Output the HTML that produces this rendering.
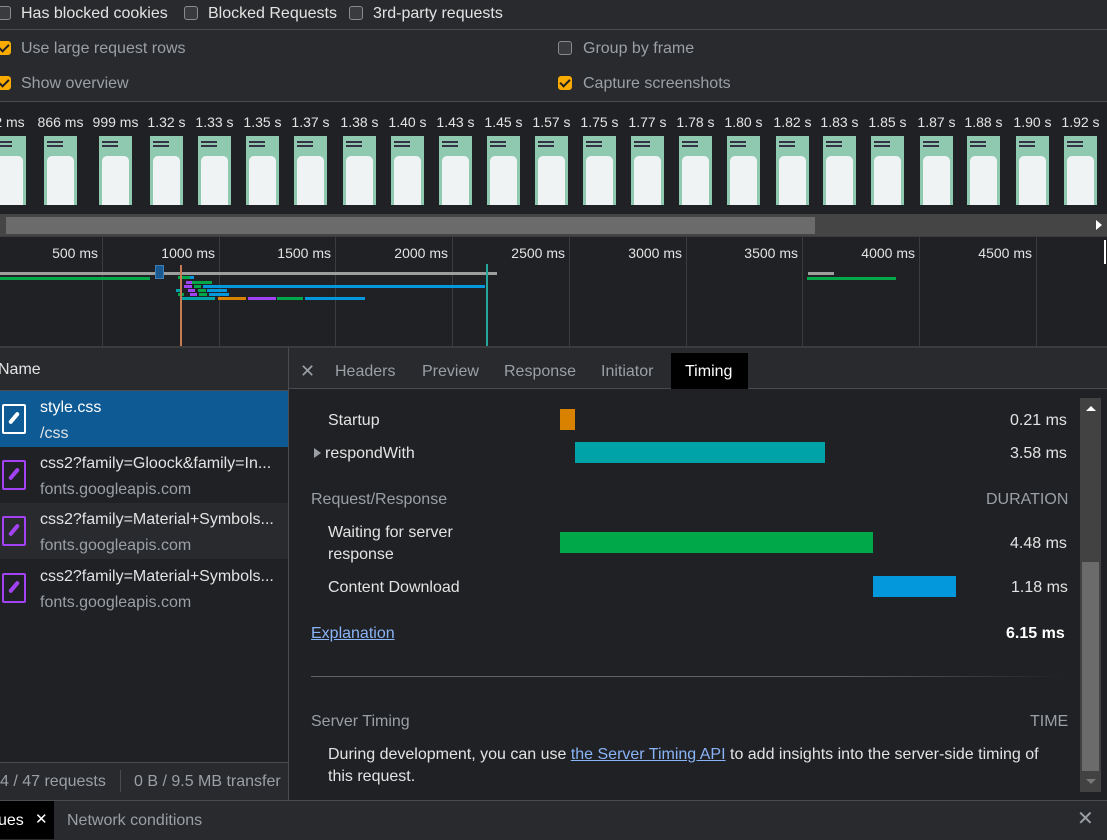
<!DOCTYPE html>
<html><head><meta charset="utf-8">
<style>
*{box-sizing:border-box;margin:0;padding:0}
body{width:1107px;height:840px;overflow:hidden;background:#202124;font-family:"Liberation Sans",sans-serif;font-size:16px;line-height:22px;color:#e3e3e3;position:relative}
.a{position:absolute;white-space:nowrap}
.cb{position:absolute;width:14px;height:14px;border:1.5px solid #8a8a8a;border-radius:3px;background:#3a3b3e}
.cb.on{background:#f9ab00;border-color:#f9ab00}
.cb.on:after{content:"";position:absolute;left:3px;top:0px;width:4px;height:8px;border:solid #202124;border-width:0 2px 2px 0;transform:rotate(45deg)}
.lbl{color:#9aa0a6}
.th{position:absolute;top:136px;width:33px;height:69px;background:#8fc9b0;overflow:hidden}
.th .c{position:absolute;left:3px;right:3px;top:20px;bottom:0;background:#eff3f3;border-radius:5px 5px 0 0}
.th .t{position:absolute;left:3px;top:5px;width:16px;height:2px;background:#334;box-shadow:0 4px 0 #334}
.tl{position:absolute;top:237px;width:1px;height:110px;background:#3c3c3f}
.tlab{position:absolute;top:242px;font-size:14px;color:#e3e3e3;text-align:right;width:90px}
.bar{position:absolute;height:3px}
.row{position:absolute;left:0;width:288px;height:56px}
.ic{position:absolute;left:2px;top:13px;width:24px;height:30px;border:2.5px solid #a142f4;border-radius:2px}
.ic:after{content:"";position:absolute;left:3px;top:10px;width:14px;height:4px;background:#a142f4;transform:rotate(-50deg);border-radius:2px}
.ic.w{border-color:#fff}.ic.w:after{background:#fff}
.n1{position:absolute;left:40px;top:6px;color:#e3e3e3}
.n2{position:absolute;left:40px;top:32px;color:#9aa0a6}
</style></head><body>
<div class="a" style="left:0;top:0;width:1107px;height:101px;background:#292a2d"></div>
<div class="a" style="left:0;top:29px;width:1107px;height:1px;background:#494c50"></div>
<div class="a" style="left:0;top:101px;width:1107px;height:1px;background:#494c50"></div>
<div class="cb" style="left:-3px;top:6px"></div><div class="a" style="left:21px;top:3px">Has blocked cookies</div>
<div class="cb" style="left:184px;top:6px"></div><div class="a" style="left:208px;top:3px">Blocked Requests</div>
<div class="cb" style="left:349px;top:6px"></div><div class="a" style="left:373px;top:3px">3rd-party requests</div>
<div class="cb on" style="left:-3px;top:41px"></div><div class="a lbl" style="left:21px;top:38px">Use large request rows</div>
<div class="cb on" style="left:-3px;top:76px"></div><div class="a lbl" style="left:21px;top:73px">Show overview</div>
<div class="cb" style="left:558px;top:41px"></div><div class="a lbl" style="left:583px;top:38px">Group by frame</div>
<div class="cb on" style="left:558px;top:76px"></div><div class="a lbl" style="left:583px;top:73px">Capture screenshots</div>
<div id="film"></div>
<div class="a" style="left:0;top:214px;width:1107px;height:22px;background:#454545"></div>
<div class="a" style="left:6px;top:217px;width:809px;height:17px;background:#6b6b6b"></div>
<div class="a" style="left:1096px;top:220px;width:0;height:0;border-left:6px solid #fff;border-top:5px solid transparent;border-bottom:5px solid transparent"></div>
<div class="a" style="left:0;top:236px;width:1107px;height:1px;background:#3c3c3f"></div>
<div id="tl"></div>
<div class="a" style="left:0;top:346px;width:1107px;height:2px;background:#3c3c3f"></div>
<div class="a" style="left:0;top:348px;width:288px;height:452px;background:#202124"></div>
<div class="a" style="left:0;top:348px;width:288px;height:43px;background:#292a2d;border-bottom:1px solid #494c50"></div>
<div class="a" style="left:-2px;top:359px">Name</div>
<div class="row" style="top:391px;background:#0e5a94"><div class="ic w"></div><div class="n1" style="color:#fff">style.css</div><div class="n2" style="color:#e3e3e3">/css</div></div>
<div class="row" style="top:447px;background:#202124"><div class="ic"></div><div class="n1">css2?family=Gloock&amp;family=In...</div><div class="n2">fonts.googleapis.com</div></div>
<div class="row" style="top:503px;background:#292a2d"><div class="ic"></div><div class="n1">css2?family=Material+Symbols...</div><div class="n2">fonts.googleapis.com</div></div>
<div class="row" style="top:560px;background:#202124;height:57px"><div class="ic"></div><div class="n1">css2?family=Material+Symbols...</div><div class="n2">fonts.googleapis.com</div></div>
<div class="a" style="left:0;top:762px;width:288px;height:38px;background:#292a2d;border-top:1px solid #494c50"></div>
<div class="a lbl" style="left:0;top:771px">4 / 47 requests</div>
<div class="a" style="left:120px;top:770px;width:1px;height:22px;background:#494c50"></div>
<div class="a lbl" style="left:134px;top:771px">0 B / 9.5 MB transfer</div>
<div class="a" style="left:288px;top:348px;width:1px;height:452px;background:#494c50"></div>
<div class="a" style="left:289px;top:348px;width:818px;height:41px;background:#292a2d;border-bottom:1px solid #494c50"></div>
<div class="a lbl" style="left:300px;top:360px;font-size:18px">✕</div>
<div class="a lbl" style="left:335px;top:361px">Headers</div>
<div class="a lbl" style="left:422px;top:361px">Preview</div>
<div class="a lbl" style="left:504px;top:361px">Response</div>
<div class="a lbl" style="left:601px;top:361px">Initiator</div>
<div class="a" style="left:671px;top:353px;width:77px;height:36px;background:#000"></div>
<div class="a" style="left:685px;top:361px;color:#fff">Timing</div>
<div class="a" style="left:328px;top:410px">Startup</div>
<div class="a" style="left:560px;top:409px;width:15px;height:21px;background:#d88200"></div>
<div class="a" style="left:1010px;top:410px">0.21 ms</div>
<div class="a" style="left:314px;top:448px;width:0;height:0;border-left:7px solid #9aa0a6;border-top:5px solid transparent;border-bottom:5px solid transparent"></div>
<div class="a" style="left:325px;top:443px">respondWith</div>
<div class="a" style="left:575px;top:442px;width:250px;height:21px;background:#00a3a8"></div>
<div class="a" style="left:1010px;top:443px">3.58 ms</div>
<div class="a lbl" style="left:311px;top:489px">Request/Response</div>
<div class="a lbl" style="left:986px;top:489px">DURATION</div>
<div class="a" style="left:328px;top:522px">Waiting for server</div>
<div class="a" style="left:328px;top:544px">response</div>
<div class="a" style="left:560px;top:532px;width:313px;height:21px;background:#00a84a"></div>
<div class="a" style="left:1010px;top:533px">4.48 ms</div>
<div class="a" style="left:328px;top:577px">Content Download</div>
<div class="a" style="left:873px;top:576px;width:83px;height:21px;background:#0398dc"></div>
<div class="a" style="left:1011px;top:577px">1.18 ms</div>
<div class="a" style="left:311px;top:623px;color:#8ab4f8;text-decoration:underline">Explanation</div>
<div class="a" style="left:1006px;top:623px;font-weight:bold;color:#fff">6.15 ms</div>
<div class="a" style="left:311px;top:676px;width:750px;height:1px;background:linear-gradient(90deg,#5f6368 70%,#202124)"></div>
<div class="a lbl" style="left:311px;top:711px">Server Timing</div>
<div class="a lbl" style="left:1030px;top:711px">TIME</div>
<div class="a" style="left:328px;top:744px">During development, you can use <span style="color:#8ab4f8;text-decoration:underline">the Server Timing API</span> to add insights into the server-side timing of</div>
<div class="a" style="left:328px;top:766px">this request.</div>
<div class="a" style="left:1080px;top:398px;width:21px;height:394px;background:#424242"></div>
<div class="a" style="left:1082px;top:562px;width:17px;height:209px;background:#6b6b6b"></div>
<div class="a" style="left:1086px;top:406px;width:0;height:0;border-bottom:5px solid #fff;border-left:5px solid transparent;border-right:5px solid transparent"></div>
<div class="a" style="left:1086px;top:779px;width:0;height:0;border-top:5px solid #777;border-left:5px solid transparent;border-right:5px solid transparent"></div>
<div class="a" style="left:0;top:800px;width:1107px;height:40px;background:#292a2d;border-top:1px solid #494c50"></div>
<div class="a" style="left:0;top:801px;width:54px;height:38px;background:#000"></div>
<div class="a" style="left:-2px;top:810px;color:#fff">ues</div>
<div class="a" style="left:35px;top:809px;color:#fff;font-size:15px">✕</div>
<div class="a lbl" style="left:67px;top:810px">Network conditions</div>
<div class="a lbl" style="left:1077px;top:808px;font-size:20px">✕</div>
<script>
var labs=["2 ms","866 ms","999 ms","1.32 s","1.33 s","1.35 s","1.37 s","1.38 s","1.40 s","1.43 s","1.45 s","1.57 s","1.75 s","1.77 s","1.78 s","1.80 s","1.82 s","1.83 s","1.85 s","1.87 s","1.88 s","1.90 s","1.92 s"];
var xs=[-7,44,99,150,198,246,294,343,391,439,487,535,583,631,679,727,776,823,871,920,967,1016,1064];
var h="";
for(var i=0;i<xs.length;i++){
 h+='<div class="th" style="left:'+xs[i]+'px"><div class="t"></div><div class="c"></div></div>';
 h+='<div class="a" style="left:'+(xs[i]-24)+'px;width:81px;text-align:center;top:111px;font-size:14px">'+labs[i]+'</div>';
}
document.getElementById("film").innerHTML=h;
var t="";var ls=["500 ms","1000 ms","1500 ms","2000 ms","2500 ms","3000 ms","3500 ms","4000 ms","4500 ms","5"];
for(var k=0;k<10;k++){var x=102+116.7*k;
 if(k<9)t+='<div class="tl" style="left:'+Math.round(x)+'px"></div>';
 t+='<div class="tlab" style="left:'+Math.round(x-94)+'px">'+ls[k]+'</div>';}
var bars=[[0,272,497,"#9e9e9e"],[0,277,150,"#00a84a"],[178,276,12,"#00a84a"],[190,276,4,"#0398dc"],[186,281,6,"#a142f4"],[192,281,20,"#00a84a"],[184,285,8,"#a142f4"],[194,285,7,"#00a84a"],[203,285,282,"#0398dc"],[176,289,5,"#00a3a8"],[188,289,7,"#a142f4"],[198,289,8,"#00a84a"],[207,289,20,"#0398dc"],[178,293,6,"#00a84a"],[190,293,7,"#a142f4"],[199,293,8,"#00a84a"],[209,293,20,"#0398dc"],[182,297,33,"#00a3a8"],[218,297,28,"#d88200"],[248,297,28,"#a142f4"],[277,297,26,"#00a84a"],[305,297,60,"#0398dc"],[808,272,26,"#9e9e9e"],[807,277,89,"#00a84a"]];
for(var b of bars)t+='<div class="bar" style="left:'+b[0]+'px;top:'+b[1]+'px;width:'+b[2]+'px;background:'+b[3]+'"></div>';
t+='<div class="a" style="left:155px;top:265px;width:9px;height:14px;background:#1a5a90;border:1px solid #3c7fb8"></div>';
t+='<div class="a" style="left:180px;top:265px;width:2px;height:82px;background:#c87a52"></div>';
t+='<div class="a" style="left:486px;top:264px;width:2px;height:83px;background:#26a69a"></div>';
t+='<div class="a" style="left:1104px;top:240px;width:2px;height:24px;background:#fff"></div>';
document.getElementById("tl").innerHTML=t;
</script>
</body></html>
